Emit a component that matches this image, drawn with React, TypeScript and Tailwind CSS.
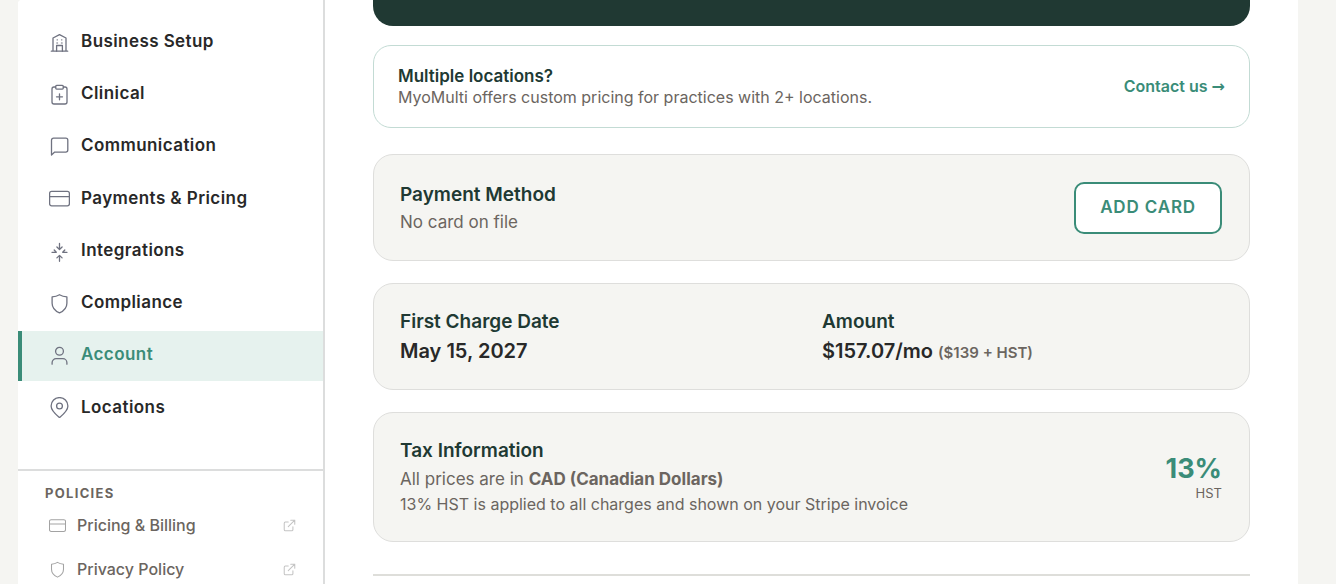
import type { ReactNode } from "react";
import clsx from "clsx";

interface IconProps {
  children: ReactNode;
  className?: string;
}

const Icon = ({ children, className = "size-[21px] text-[#6f7280]" }: IconProps) => (
  <svg
    viewBox="0 0 21 21"
    fill="none"
    stroke="currentColor"
    strokeWidth="1.3"
    strokeLinecap="round"
    strokeLinejoin="round"
    aria-hidden="true"
    className={clsx("shrink-0", className)}
  >
    {children}
  </svg>
);

const CARD = (
  <>
    <rect x="0.6" y="3.4" width="19.8" height="14.4" rx="2" />
    <path d="M.6 8.6h19.8" />
  </>
);
const SHIELD = <path d="M10.5 1.7c2.2 1.3 4.6 2 7.4 2.2v6.3c0 4.4-2.8 7.6-7.4 9.7-4.6-2.1-7.4-5.3-7.4-9.7V3.9c2.8-.2 5.2-.9 7.4-2.2z" />;

const NAV_ITEMS = [
  {
    label: "Business Setup",
    icon: (
      <>
        <path d="M2.3 19.2h16.4M4 19.2V6l6.5-3.3L17 6v13.2" />
        <path d="M7.6 19.2v-5.700h5.800v5.700" />
        <path d="M8 7.900h.6M12.400 7.900h.6M7.700 11h1M12.300 11h1" strokeWidth="1" />
      </>
    ),
  },
  {
    label: "Clinical",
    icon: (
      <>
        <path d="M6.7 3H5a2 2 0 0 0-2 2v13a2 2 0 0 0 2 2h11a2 2 0 0 0 2-2V5a2 2 0 0 0-2-2h-1.7" />
        <rect x="6.7" y="1.3" width="7.6" height="3.8" rx="1" />
        <path d="M10.5 9.8v6M7.5 12.8h6" />
      </>
    ),
  },
  {
    label: "Communication",
    icon: <path d="M2.5 19V4.2a2 2 0 0 1 2-2h12.300a2 2 0 0 1 2 2v9.900a2 2 0 0 1-2 2H5.700L2.500 19z" />,
  },
  { label: "Payments & Pricing", icon: CARD },
  {
    label: "Integrations",
    icon: (
      <>
        <path d="M10.5 2.5v5.800M7.900 6l2.600 2.500L13.100 6" />
        <path d="M10.5 20.300v-5.700M7.900 16.900l2.600-2.500 2.600 2.500" />
        <path d="M3 11.300h4.300L5.200 9M18 11.300h-4.300L15.800 9" />
      </>
    ),
  },
  { label: "Compliance", icon: SHIELD },
  {
    label: "Account",
    active: true,
    icon: (
      <>
        <circle cx="10.5" cy="6.2" r="3.9" />
        <path d="M3.1 19.2v-1.500a4 4 0 0 1 4-4h6.800a4 4 0 0 1 4 4v1.500" />
      </>
    ),
  },
  {
    label: "Locations",
    icon: (
      <>
        <path d="M18.900 9c0 4.900-4.700 8.500-8.400 11.500C6.800 17.500 2.100 13.900 2.100 9a8.400 8.400 0 0 1 16.800 0z" />
        <circle cx="10.5" cy="9" r="2.9" />
      </>
    ),
  },
];

const POLICIES = [
  { label: "Pricing & Billing", icon: CARD },
  { label: "Privacy Policy", icon: SHIELD },
];

const Sidebar = () => (
  <aside className="w-[307px] shrink-0 rounded-tl border-r-2 border-[#dcdddd] bg-white pt-[17px]">
    <nav aria-label="Settings" className="flex h-[416px] flex-col justify-between">
      {NAV_ITEMS.map((item) => (
        <a
          key={item.label}
          href="#"
          aria-current={item.active ? "page" : undefined}
          className={clsx(
            "flex h-[50px] items-center gap-[11px] border-l-4 pl-[27px] text-[17px] font-semibold tracking-wide",
            item.active
              ? "border-[#3a8c78] bg-[#e6f2ee] text-[#3a8c78]"
              : "border-transparent text-[#282828]"
          )}
        >
          <Icon>{item.icon}</Icon>
          <span className="pb-px">{item.label}</span>
        </a>
      ))}
    </nav>

    {/* Policies */}
    <div className="mt-9 border-t-2 border-[#dcdddd] pt-3">
      <h2 className="pl-[27px] text-[13px] leading-5 font-bold tracking-widest text-[#6b6560]">POLICIES</h2>
      {POLICIES.map((item) => (
        <a
          key={item.label}
          href="#"
          className="flex h-11 items-center pr-[27px] pl-[31px] text-base font-medium text-[#6b6560]"
        >
          <Icon className="size-[17px] text-[#a3a3a3]">{item.icon}</Icon>
          <span className="ml-[11px] flex-1">{item.label}</span>
          <Icon className="size-[13px] text-[#c4c4c4]">
            <g strokeWidth="1.7">
              <path d="M8.5 5H3.8A1.8 1.8 0 0 0 2 6.8v10.4A1.8 1.8 0 0 0 3.8 19h10.400a1.800 1.800 0 0 0 1.800-1.800v-4.700" />
              <path d="M12.5 2H19v6.500M19 2L8.500 12.500" />
            </g>
          </Icon>
        </a>
      ))}
    </div>
  </aside>
);

const Panel = ({ children, className }: { children: ReactNode; className?: string }) => (
  <section className={clsx("rounded-[20px] border border-[#dededc] bg-[#f5f5f2] pr-[27px] pl-[26px]", className)}>
    {children}
  </section>
);

const PanelTitle = ({ children }: { children: ReactNode }) => (
  <h2 className="text-[19px] leading-7 font-semibold text-[#203933]">{children}</h2>
);

const App = () => {
  return (
    <div className="h-screen overflow-hidden bg-[#f5f5f2] pr-[38px] pl-[18px] font-['Inter',sans-serif]">
      <div className="flex min-h-full rounded-tl bg-white">
        <Sidebar />

        <main className="min-w-0 flex-1 px-12">
          <div className="h-[26px] rounded-b-[20px] bg-[#203933]" />

          {/* Multi location offer */}
          <section className="mt-[19px] flex items-center justify-between rounded-[18px] border border-[#c3dbd4] px-6 py-5">
            <div>
              <h2 className="text-[17px] leading-[21px] font-semibold text-[#203933]">Multiple locations?</h2>
              <p className="text-base leading-5 text-[#6b6560]">
                MyoMulti offers custom pricing for practices with 2+ locations.
              </p>
            </div>
            <a href="#" className="pb-px text-base font-semibold text-[#3a8c78]">
              Contact us <span className="font-['DejaVu_Sans',sans-serif] leading-none">→</span>
            </a>
          </section>

          <div className="mt-[26px] flex flex-col gap-[22px]">
            <Panel className="flex items-center justify-between py-6">
              <div className="pt-[2px]">
                <PanelTitle>Payment Method</PanelTitle>
                <p className="text-[17px] leading-[27px] text-[#6b6560]">No card on file</p>
              </div>
              <button
                type="button"
                className="h-[52px] rounded-[10px] border-2 border-[#3a8c78] bg-white px-6 text-[17px] font-semibold tracking-wider text-[#3a8c78]"
              >
                ADD CARD
              </button>
            </Panel>

            <Panel className="grid grid-cols-2 gap-[22px] pt-6 pb-[22px]">
              <div>
                <PanelTitle>First Charge Date</PanelTitle>
                <p className="text-xl leading-[31px] font-semibold text-[#282828]">May 15, 2027</p>
              </div>
              <div>
                <PanelTitle>Amount</PanelTitle>
                <p className="text-xl leading-[31px] font-semibold text-[#282828]">
                  $157.07/mo <span className="text-[15px] leading-none text-[#6b6560]">($139 + HST)</span>
                </p>
              </div>
            </Panel>

            <Panel className="flex items-center justify-between pt-6 pb-[25px]">
              <div>
                <PanelTitle>Tax Information</PanelTitle>
                <p className="text-[17px] leading-7 text-[#6b6560]">
                  All prices are in <strong className="font-bold">CAD (Canadian Dollars)</strong>
                </p>
                <p className="text-base leading-[23px] text-[#6b6560]">
                  13% HST is applied to all charges and shown on your Stripe invoice
                </p>
              </div>
              <div className="pt-1 text-right">
                <p className="text-[27px] leading-7 font-bold text-[#3a8c78]">13%</p>
                <p className="text-[13px] leading-5 text-[#6b6560]">HST</p>
              </div>
            </Panel>
          </div>

          <hr className="mt-8 border-t-2 border-[#dededa]" />
        </main>
      </div>
    </div>
  );
};

export default App;
